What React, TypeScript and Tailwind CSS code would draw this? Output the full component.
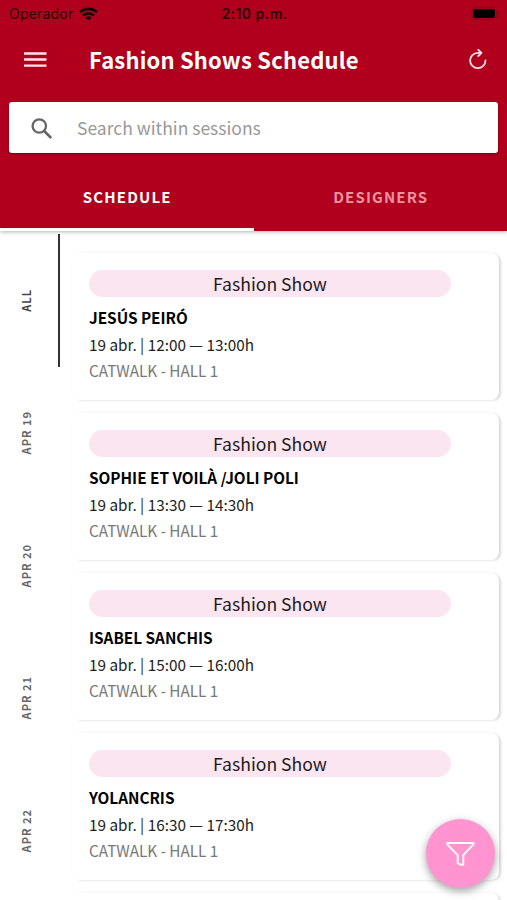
import React, { useState } from 'react';

interface Session {
  id: number;
  type: string;
  designer: string;
  time: string;
  location: string;
}

const sessions: Session[] = [
  { id: 1, type: 'Fashion Show', designer: 'JESÚS PEIRÓ', time: '19 abr. | 12:00 — 13:00h', location: 'CATWALK - HALL 1' },
  { id: 2, type: 'Fashion Show', designer: 'SOPHIE ET VOILÀ /JOLI POLI', time: '19 abr. | 13:30 — 14:30h', location: 'CATWALK - HALL 1' },
  { id: 3, type: 'Fashion Show', designer: 'ISABEL SANCHIS', time: '19 abr. | 15:00 — 16:00h', location: 'CATWALK - HALL 1' },
  { id: 4, type: 'Fashion Show', designer: 'YOLANCRIS', time: '19 abr. | 16:30 — 17:30h', location: 'CATWALK - HALL 1' },
];

const days = ['ALL', 'APR 19', 'APR 20', 'APR 21', 'APR 22'];

const StatusBar: React.FC = () => (
  <div className="flex h-[27px] items-center justify-between pl-[9px] pr-[7px] font-['Inter',sans-serif] text-[14px] text-[#2a0007]">
    <div className="flex flex-1 items-center gap-[6px]">
      <span className="tracking-[0.2px]">Operador</span>
      <svg className="h-[14px] w-[19px]" viewBox="0 0 19 14" fill="none" stroke="#1c0004" strokeWidth="2.6">
        <path d="M1 5.3a12.3 12.3 0 0 1 17 0" />
        <path d="M4 8.6a8 8 0 0 1 11 0" />
        <path d="M9.5 13.6 6.5 10.7a4.3 4.3 0 0 1 6 0z" fill="#1c0004" stroke="none" />
      </svg>
    </div>
    <span className="font-semibold tracking-[0.45px]">2:10 p.m.</span>
    <div className="flex flex-1 justify-end">
      <svg className="h-[13px] w-[29px]" viewBox="0 0 29 13">
        <rect x="0.7" y="0.7" width="25" height="11.6" rx="3.6" fill="none" stroke="#8c0016" />
        <rect x="2" y="2.3" width="22" height="8.8" rx="2" fill="#000" />
        <path d="M27 4.5v4c1.6-.6 1.6-3.4 0-4z" fill="#7c0012" />
      </svg>
    </div>
  </div>
);

const SessionCard: React.FC<{ session: Session }> = ({ session }) => (
  <div className="h-[147px] rounded-lg bg-white pl-[17px] pt-[17px] shadow-[3px_1px_3px_-1px_rgba(0,0,0,0.13),1px_0_3px_rgba(0,0,0,0.06)]">
    <div className="h-[27px] w-[362px] rounded-full bg-[#fbe5f1] text-center text-[17.6px] leading-[27px] text-[#1f1a1d]">
      {session.type}
    </div>
    <h2 className="mt-[8px] text-[15.3px] font-bold leading-[24px] text-black">{session.designer}</h2>
    <p className="mt-[2px] text-[15.3px] leading-[27px] text-[#222]">{session.time}</p>
    <p className="text-[15.3px] leading-[25px] text-[#777]">{session.location}</p>
  </div>
);

export default function App() {
  const [activeTab, setActiveTab] = useState('SCHEDULE');
  const [activeDay, setActiveDay] = useState('ALL');
  const [query, setQuery] = useState('');

  return (
    <div className="relative flex h-[900px] w-full flex-col overflow-hidden bg-white font-['Noto_Sans_CJK_JP',sans-serif]">
      <header className="relative z-10 flex h-[231px] shrink-0 flex-col bg-[#b1001d] shadow-[0_1px_4px_rgba(0,0,0,0.3)]">
        <StatusBar />
        <div className="flex h-[64px] items-center pl-[24px] pr-[19px]">
          <button type="button" aria-label="Menu" className="pt-[1px]">
            <svg className="h-[17px] w-[23px]" viewBox="0 0 23 17" fill="none" stroke="#ffe9ec" strokeWidth="2.3">
              <path d="M0 2.5h22.5M0 8.5h22.5M0 14.7h22.5" />
            </svg>
          </button>
          <h1 className="ml-[42px] flex-1 text-[22px] font-bold leading-[32px] tracking-[0.18px] text-white">Fashion Shows Schedule</h1>
          <button type="button" aria-label="Refresh">
            <svg className="h-[22px] w-[20px]" viewBox="0 0 20 22" fill="none" stroke="#ffe3e7" strokeWidth="1.8" strokeLinecap="round" strokeLinejoin="round">
              <path d="M17.5 12.5A7.7 7.7 0 1 1 9.8 4.8h3" />
              <path d="M10.3 1.8l3.2 3-3.2 3.2" />
            </svg>
          </button>
        </div>

        <label className="mx-[9px] mt-[11px] flex h-[51px] items-center rounded-[3px] bg-white pl-[22px] shadow-[0_1px_2px_rgba(0,0,0,0.4)]">
          <svg className="mt-[1px] h-[21px] w-[21px]" viewBox="0 0 21 21" fill="none" stroke="#666" strokeWidth="2.3">
            <circle cx="8.3" cy="8" r="6.7" />
            <path d="M13 12.8l7.2 7.2" strokeWidth="2.7" />
          </svg>
          <input
            type="text"
            value={query}
            onChange={(e) => setQuery(e.target.value)}
            placeholder="Search within sessions"
            className="ml-[25px] flex-1 text-[17.5px] leading-[28px] outline-none placeholder:text-[#999]"
          />
        </label>

        <nav className="flex flex-1">
          {['SCHEDULE', 'DESIGNERS'].map((tab) => (
            <button
              key={tab}
              type="button"
              onClick={() => setActiveTab(tab)}
              className={`flex-1 border-b-[3px] pl-px pt-[13px] text-[15px] font-bold tracking-[1.15px] ${
                activeTab === tab ? 'border-white text-white' : 'border-transparent text-[#f0929f]'
              }`}
            >
              {tab}
            </button>
          ))}
        </nav>
      </header>

      <main className="flex flex-1">
        <aside className="flex w-[60px] shrink-0 flex-col pt-[3px]">
          {days.map((day) => (
            <button
              key={day}
              type="button"
              onClick={() => setActiveDay(day)}
              className={`flex h-[132.6px] shrink-0 items-center justify-center border-r-2 pr-[7px] text-[11px] font-bold leading-[16px] tracking-[1px] ${
                activeDay === day ? 'border-[#333] text-[#444]' : 'border-transparent text-[#666]'
              }`}
            >
              <span className="rotate-180 [writing-mode:vertical-rl]">{day}</span>
            </button>
          ))}
        </aside>

        <section className="flex flex-1 flex-col gap-[12.9px] pl-[12px] pr-[8px] pt-[22px]">
          {sessions.map((session) => (
            <SessionCard key={session.id} session={session} />
          ))}
          <div className="h-[147px] shrink-0 rounded-lg bg-white shadow-[3px_1px_3px_-1px_rgba(0,0,0,0.13),1px_0_3px_rgba(0,0,0,0.06)]" />
        </section>
      </main>

      <button
        type="button"
        aria-label="Filter"
        className="absolute bottom-[12px] right-[12px] flex h-[69px] w-[69px] items-center justify-center rounded-full bg-[#ff94d0] shadow-[0_3px_8px_rgba(0,0,0,0.38)]"
      >
        <svg className="h-[26px] w-[29px]" viewBox="0 0 29 26" fill="none" stroke="#fff" strokeWidth="1.9" strokeLinejoin="round">
          <path d="M1.3 2h26.2v1.3L17.3 14.2v9.6h-2.2l-3.4-1.6v-8L1.3 3.3z" />
        </svg>
      </button>
    </div>
  );
}
